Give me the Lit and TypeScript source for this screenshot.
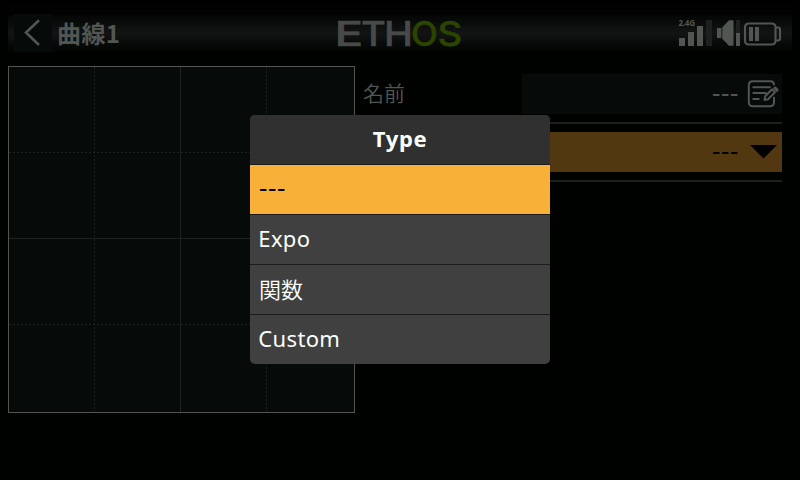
import { LitElement, html, svg, css } from "lit";
import { customElement, state } from "lit/decorators.js";
import { classMap } from "lit/directives/class-map.js";

@customElement("status-bar")
class StatusBar extends LitElement {
  static styles = css`
    :host { display: block; width: 784px; height: 56px; margin-left: 8px;
      background: linear-gradient(#000 0, #010201 14px, #050706 16px, #070a09 22px, #0e1110 28px, #111413 33px, #0e1110 38px, #070a09 43px, #040605 50px, #000200 52px); }
    .bar { display: grid; grid-template-columns: 322px 1fr 113px; height: 38px; padding: 14px 8px 0 6px; align-items: center; }
    .left { display: flex; align-items: center; }
    .back { width: 38px; height: 38px; background: #060a08; }
    .back svg, .logo svg, .icons svg { display: block; overflow: visible; }
    .title { margin-left: 5px; color: #525652; font: 700 24px/38px "Noto Sans CJK JP", sans-serif; letter-spacing: .4px; white-space: nowrap; }
    .logo-text { font: 500 34px "Inter", sans-serif; }
    .small { font: 700 8px "Noto Sans", sans-serif; fill: #525652; }
  `;
  render() {
    const letters: [string, number, number, string][] = [
      ["E", -1.5, 1.4, "#484a49"], ["T", 25, 1.12, "#484a49"], ["H", 48, 1.14, "#484a49"],
      ["O", 75, 1.03, "#2b4400"], ["S", 101.5, 1.13, "#2b4400"],
    ];
    return html`<div class="bar">
      <div class="left">
        <div class="back"><svg width="38" height="38"><path d="M25 6.2 12 18.5 25 31" fill="none" stroke="#525652" stroke-width="2.6"/></svg></div>
        <span class="title">曲線1</span>
      </div>
      <div class="logo"><svg width="130" height="38">
        ${letters.map(([c, x, s, f]) => svg`<text class="logo-text" transform=${`translate(${x} 31.6) scale(${s} 1)`} fill=${f} stroke=${f} stroke-width="0.5">${c}</text>`)}
      </svg></div>
      <div class="icons"><svg width="113" height="38" viewBox="671 14 113 38">
        <text class="small" x="678.5" y="26.2" textLength="16.5">2.4G</text>
        <g fill="#525652">
          <path d="M679 38h6v8h-6zM688 32h6v14h-6zM697 26h6v20h-6z"/>
          <path fill="#1c201e" d="M706 20h6v26h-6zM736 20h4v13h-4z"/>
          <path d="M717 28h4.4v10H717zM722.3 27.2 729 20.3h4.5v25.4H729l-6.7-7zM736 33h4v13h-4z"/>
          <path d="M749 27h4v14h-4zM755 27h4v14h-4z"/>
        </g>
        <path d="M749 23.5h22.5q4 0 4 4v13q0 4-4 4H749q-4 0-4-4v-13q0-4 4-4zM776 27.5h2q2 0 2 2v9q0 2-2 2h-2" fill="none" stroke="#525652" stroke-width="2.1"/>
      </svg></div>
    </div>`;
  }
}

@customElement("curve-plot")
class CurvePlot extends LitElement {
  static styles = css`:host, svg { display: block; }`;
  render() {
    const dashed = [86.5, 258.5];
    return html`<svg width="347" height="347" fill="none">
      <rect x="0.5" y="0.5" width="346" height="346" fill="#060a08" stroke="#525652"/>
      <g stroke="#1e2220">
        <path d="M172.5 1v345M1 172.5h345"/>
        ${dashed.map((p) => svg`<path stroke-dasharray="2 2" d=${`M${p} 1v345M1 ${p}h345`}/>`)}
      </g>
    </svg>`;
  }
}

@customElement("option-dialog")
class OptionDialog extends LitElement {
  static properties = { heading: {}, options: { attribute: false }, selected: { type: Number } };
  declare heading: string;
  declare options: string[];
  declare selected: number;
  static styles = css`
    :host { display: block; width: 300px; height: 249px; border-radius: 5px; overflow: hidden; background: #404040; color: #fafffa;
      font: 22px "Noto Sans", "Noto Sans CJK JP", sans-serif; }
    .heading { height: 49px; line-height: 47px; background: #303030; text-align: center; font-weight: 700; letter-spacing: .7px; }
    .option { box-sizing: border-box; height: 50px; border-top: 1px solid #1c1c1c; padding-left: 8.3px; line-height: 46px; letter-spacing: .35px; }
    .cjk { padding-left: 9px; font-family: "Noto Sans CJK JP", sans-serif; font-weight: 350; letter-spacing: 0; line-height: 47px; }
    .selected { background: #f8b038; color: #000; }
    .dashes { padding-left: 9px; font-size: 26px; line-height: 44px; letter-spacing: .6px; }
  `;
  render() {
    return html`<div class="heading">${this.heading}</div>
      ${this.options.map((o, i) => html`<div class=${classMap({ option: true, selected: i === this.selected, dashes: o === "---", cjk: /[^\x00-\x7f]/.test(o) })}>${o}</div>`)}`;
  }
}

@customElement("app-root")
class AppRoot extends LitElement {
  static styles = css`
    :host { display: block; position: relative; width: 800px; height: 480px; overflow: hidden; background: #000200; }
    .main { display: flex; padding: 10px 18px 0 8px; gap: 8px; }
    .form { flex: 1; }
    .row { height: 58px; display: flex; }
    .label { width: 159px; padding-top: 7px; color: #525652; font: 350 21px/38px "Noto Sans CJK JP", sans-serif; }
    .slot { width: 260px; height: 58px; border-bottom: 2px solid #1c201e; box-sizing: border-box; padding: 8px 0; }
    .field { height: 40px; display: flex; justify-content: flex-end; background: #060a08; color: #525652;
      font: 26px/36px "Noto Sans", sans-serif; letter-spacing: .6px; }
    .choice { background: #523811; color: #000; }
    .field svg { display: block; margin-left: 7px; }
    .dialog { position: absolute; left: 250px; top: 115px; }
  `;
  @state() private options = ["---", "Expo", "関数", "Custom"];
  render() {
    return html`<status-bar></status-bar>
      <div class="main">
        <curve-plot></curve-plot>
        <div class="form">
          <div class="row">
            <div class="label">名前</div>
            <div class="slot"><div class="field"><span>---</span>
              <svg width="36" height="40" viewBox="746 74 36 40" fill="none" stroke="#525652" stroke-width="2" stroke-linecap="round">
                <path d="M774 84.5q-.2-3.3-3.5-3.3h-17.700q-4 0-4 4v17q0 4 4 4h17.200q4 0 4-4v-4.500M753.300 87.300h16.500M753.300 93.100h12.500M753.300 99h5.500"/>
                <path fill="#525652" stroke="none" d="m774.300 86.800 1.400-.4 3 3-.5 1.500-1.400 1.300-3.800-3.900z"/>
                <path d="m772 89.300 3 3-7 7-3.500.8.700-3.800z" stroke-linejoin="round"/>
              </svg></div></div>
          </div>
          <div class="row">
            <div class="label"></div>
            <div class="slot"><div class="field choice"><span>---</span>
              <svg width="36" height="40" viewBox="746 132 36 40"><path d="M750 145h27l-13.500 13.500z"/></svg></div></div>
          </div>
        </div>
      </div>
      <option-dialog class="dialog" .heading=${"Type"} .options=${this.options} .selected=${0}></option-dialog>`;
  }
}
